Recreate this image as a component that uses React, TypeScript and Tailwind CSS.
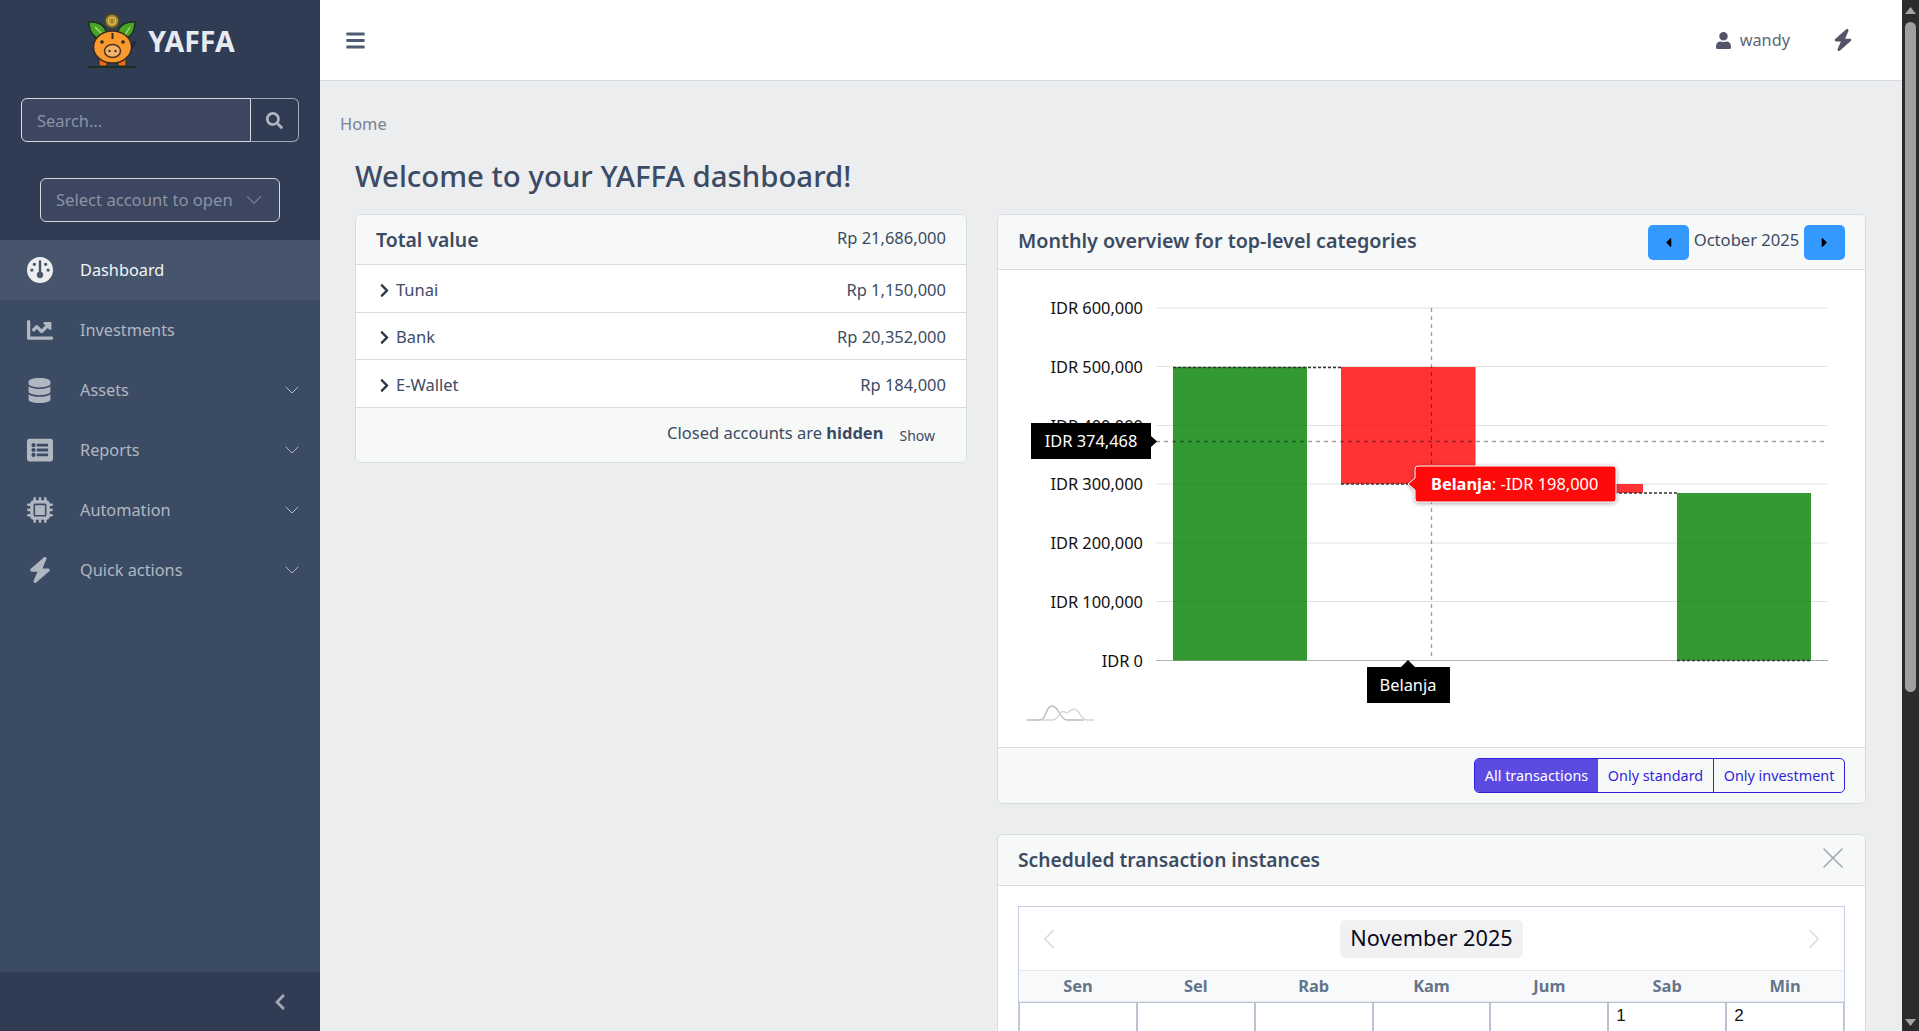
import { FaBars, FaCaretLeft, FaCaretRight, FaChartLine, FaChevronLeft, FaChevronRight, FaDatabase, FaListAlt, FaSearch, FaUser } from "react-icons/fa";
import { FaBolt, FaGauge, FaMicrochip } from "react-icons/fa6";
import { ChevronDown, ChevronLeft, ChevronRight, X } from "lucide-react";

const font = "[font-family:'Noto_Sans','Liberation_Sans',sans-serif]";

function Piggy() {
  return (
    <svg width="52" height="56" viewBox="0 0 52 56" className="shrink-0">
      <circle cx="25" cy="8" r="7" fill="#a8892f" stroke="#4b4a2a" strokeWidth="1.5" />
      <circle cx="25" cy="8" r="3.5" fill="none" stroke="#e3c766" strokeWidth="1.2" />
      <path d="M2 9 C13 8 21 14 20 26 C10 28 2 22 2 9Z" fill="#4aa324" stroke="#1c2f22" strokeWidth="1.5" />
      <path d="M48 9 C37 8 29 14 30 26 C40 28 48 22 48 9Z" fill="#4aa324" stroke="#1c2f22" strokeWidth="1.5" />
      <path d="M8 14 L17 23 M38 22 L43 14" stroke="#b6e07a" strokeWidth="1.2" />
      <path d="M12 44 L12 53 L20 53 L20 47 L31 47 L31 53 L39 53 L39 44Z" fill="#f26a12" stroke="#1c2f22" strokeWidth="1" />
      <ellipse cx="25.500" cy="34" rx="19" ry="16" fill="#fb9a2c" stroke="#3a2c22" strokeWidth="1.5" />
      <path d="M44 30 L50 27 L47 34 L44 37Z" fill="#1f2a3c" />
      <rect x="24.500" y="20" width="2" height="6" fill="#3a2c22" />
      <ellipse cx="25.500" cy="38" rx="8" ry="6.500" fill="#f6b26b" stroke="#4a3425" strokeWidth="1.5" />
      <circle cx="22.500" cy="38" r="1.200" fill="#4a3425" />
      <circle cx="28.500" cy="38" r="1.200" fill="#4a3425" />
      <circle cx="15" cy="29" r="1.800" fill="#2a2a2a" />
      <circle cx="36" cy="29" r="1.800" fill="#2a2a2a" />
      <rect x="1" y="53" width="48" height="2" fill="#1c2f22" />
    </svg>
  );
}

function NavItem({ icon, label, active, caret }: { icon: React.ReactNode; label: string; active?: boolean; caret?: boolean }) {
  return (
    <div className={`flex h-[60px] items-center pl-[27px] pr-[16px] text-[16.300px] ${active ? "bg-[#46546c] text-[#f2f4f7]" : "text-[#b1b7c1]"}`}>
      <span className={`flex w-[53px] shrink-0 items-center ${active ? "text-[#ebedef]" : "text-[#b1b7c1]"}`}>{icon}</span>
      <span className="flex-1">{label}</span>
      {caret && <ChevronDown size={24} strokeWidth={1} className="text-[#b1b7c1]" />}
    </div>
  );
}

function Sidebar() {
  return (
    <aside className="flex h-full w-[320px] shrink-0 flex-col bg-[#303c54]">
      <div className="flex h-[80px] shrink-0 items-center justify-center gap-[9px] pl-[2px] pt-[2px]">
        <Piggy />
        <span className="text-[28.500px] font-bold text-[#e6eaf1]">YAFFA</span>
      </div>
      <div className="mx-[21px] mt-[18px] flex h-[44px] shrink-0 text-[16.400px]">
        <input readOnly placeholder="Search..." className="h-full w-[230px] rounded-l-[6px] border border-[#d8dbe0] bg-[#3c4660] px-[15px] text-[#ccc] outline-none placeholder:text-[#8a93a3]" />
        <div className="flex h-full flex-1 items-center justify-center rounded-r-[6px] border border-l-0 border-[#a3a9b5] text-[#b1b7c1]">
          <FaSearch size={17} />
        </div>
      </div>
      <div className="mx-[40px] mt-[36px] flex h-[44px] shrink-0 items-center justify-between rounded-[6px] border border-[#d8dbe0] bg-[#3c4660] pl-[15px] pr-[12px] text-[16.600px] text-[#8a93a3]">
        <span>Select account to open</span>
        <ChevronDown size={26} strokeWidth={1.200} className="text-[#737c8d]" />
      </div>
      <nav className="mt-[18px] flex-1 bg-[#3c4b64]">
        <NavItem active label="Dashboard" icon={<FaGauge size={26} />} />
        <NavItem label="Investments" icon={<FaChartLine size={26} />} />
        <NavItem caret label="Assets" icon={<FaDatabase size={25} />} />
        <NavItem caret label="Reports" icon={<FaListAlt size={26} />} />
        <NavItem caret label="Automation" icon={<FaMicrochip size={26} />} />
        <NavItem caret label="Quick actions" icon={<FaBolt size={26} />} />
      </nav>
      <div className="flex h-[59px] shrink-0 items-center justify-end bg-[#303c54] pr-[31px] text-[#a3aab6]">
        <FaChevronLeft size={18} />
      </div>
    </aside>
  );
}

function Header() {
  return (
    <header className="flex h-[81px] shrink-0 items-center border-b border-[#d8dbe0] bg-white pl-[25px] text-[#4f5d73]">
      <FaBars size={21} className="text-[#4f5d73]" />
      <div className="ml-auto flex items-center pr-[48px]">
        <FaUser size={17} className="text-[#545468]" />
        <span className="ml-[8px] text-[16.300px] text-[#5c6873]">wandy</span>
        <FaBolt size={22} className="ml-[42px] text-[#545468]" />
      </div>
    </header>
  );
}

function AccountRow({ name, value }: { name: string; value: string }) {
  return (
    <div className="flex h-[47.500px] items-center justify-between border-b border-[#d8dbe0] pl-[21px] pr-[20px] pt-[4px] text-[16.500px] text-[#3c4b64]">
      <span className="flex items-center gap-[4px]">
        <FaChevronRight size={15} className="text-[#2c384a]" />
        {name}
      </span>
      <span>{value}</span>
    </div>
  );
}

function TotalCard() {
  return (
    <section className="overflow-hidden rounded-[6px] border border-[#d8dbe0] bg-white">
      <div className="flex h-[50px] items-center justify-between border-b border-[#d8dbe0] bg-[#f7f8f8] pl-[20px] pr-[20px] text-[#3c4b64]">
        <span className="pt-[1px] text-[19.400px] font-semibold">Total value</span>
        <span className="-mt-[3px] text-[16.500px]">Rp 21,686,000</span>
      </div>
      <AccountRow name="Tunai" value="Rp 1,150,000" />
      <AccountRow name="Bank" value="Rp 20,352,000" />
      <AccountRow name="E-Wallet" value="Rp 184,000" />
      <div className="flex h-[54px] items-center justify-end bg-[#f7f8f8] pb-[2px] pr-[31px] text-[16.500px] text-[#3c4b64]">
        <span>Closed accounts are <b className="font-bold">hidden</b></span>
        <span className="ml-[16px] mt-[3px] text-[14px]">Show</span>
      </div>
    </section>
  );
}

function Chart() {
  const ticks: [string, number][] = [
    ["IDR 600,000", 309],
    ["IDR 500,000", 367.5],
    ["IDR 400,000", 426.5],
    ["IDR 300,000", 485],
    ["IDR 200,000", 544],
    ["IDR 100,000", 602.5],
    ["IDR 0", 661.5],
  ];
  return (
    <svg viewBox="998 271 866 477" className="block h-[477px] w-[866px]" fontFamily="'Noto Sans','Liberation Sans',sans-serif">
      {ticks.map(([t, y]) => (
        <g key={t}>
          <line x1="1156" x2="1827" y1={y} y2={y} stroke={y > 660 ? "#b4b4b4" : "#e2e2e2"} strokeWidth="1" />
          <text x="1143" y={y + 6} textAnchor="end" fontSize="16.400" fill="#111">{t}</text>
        </g>
      ))}
      <rect x="1173" y="368" width="134" height="293.500" fill="#008000" fillOpacity="0.8" />
      <rect x="1341" y="368" width="134.500" height="117" fill="#ff0000" fillOpacity="0.8" />
      <rect x="1509" y="485" width="134" height="9" fill="#ff0000" fillOpacity="0.8" />
      <rect x="1677" y="494" width="134" height="167.500" fill="#008000" fillOpacity="0.8" />
      <g stroke="#333" strokeWidth="1.500" strokeDasharray="3 2">
        <line x1="1173" x2="1341" y1="368.500" y2="368.500" />
        <line x1="1341" x2="1509" y1="485" y2="485" />
        <line x1="1509" x2="1677" y1="494" y2="494" />
        <line x1="1677" x2="1811" y1="661.500" y2="661.500" />
      </g>
      <line x1="1811" x2="1828" y1="661.500" y2="661.500" stroke="#999" strokeDasharray="3 2" />
      <line x1="1431.500" x2="1431.500" y1="309" y2="660" stroke="#000" strokeOpacity="0.38" strokeWidth="1.300" strokeDasharray="4 4" />
      <line x1="1156" x2="1828" y1="442.500" y2="442.500" stroke="#000" strokeOpacity="0.38" strokeWidth="1.300" strokeDasharray="4 4" />
      <path d="M1031 424 H1151 V437 L1157 442.500 L1151 448 V460 H1031Z" fill="#000" />
      <text x="1091" y="447.500" textAnchor="middle" fontSize="16.400" fill="#fff">IDR 374,468</text>
      <path d="M1367 668 H1401 L1408 661 L1415 668 H1450 V704 H1367Z" fill="#000" />
      <text x="1408" y="691.500" textAnchor="middle" fontSize="16.400" fill="#fff">Belanja</text>
      <path d="M1418 467 H1613 Q1616 467 1616 470 V500 Q1616 503 1613 503 H1418 Q1415 503 1415 500 V491 L1408 485 L1415 479 V470 Q1415 467 1418 467Z" fill="#ff0a0a" stroke="#fff" strokeWidth="1" style={{ filter: "drop-shadow(0 1px 2px rgba(0,0,0,.35))" }} />
      <text x="1431" y="490.500" fontSize="16.400" fill="#fff"><tspan fontWeight="700">Belanja</tspan>: -IDR 198,000</text>
      <g fill="none" strokeWidth="1.500">
        <path d="M1027 721 H1040 C1047 721 1045 707 1052 707 C1059 707 1060 721 1067 721 H1084" stroke="#bdbdbd" />
        <path d="M1042 721 H1052 C1060 721 1059 710 1065 713 C1068 716 1070 710 1074 710 C1080 710 1080 721 1087 721 H1094" stroke="#d8d8d8" />
      </g>
    </svg>
  );
}

function OverviewCard() {
  return (
    <section className="overflow-hidden rounded-[6px] border border-[#d8dbe0] bg-white">
      <div className="flex h-[55px] items-center justify-between border-b border-[#d8dbe0] bg-[#f7f8f8] pl-[20px] pr-[20px] text-[#3c4b64]">
        <span className="pb-[2px] text-[19.700px] font-semibold">Monthly overview for top-level categories</span>
        <div className="flex items-center text-[16.600px]">
          <div className="flex h-[35px] w-[41px] items-center justify-center rounded-[5px] bg-[#3399ff] text-black"><FaCaretLeft size={15} /></div>
          <span className="w-[115px] pb-[4px] text-center">October 2025</span>
          <div className="flex h-[35px] w-[41px] items-center justify-center rounded-[5px] bg-[#3399ff] text-black"><FaCaretRight size={15} /></div>
        </div>
      </div>
      <Chart />
      <div className="flex h-[56px] items-center justify-end border-t border-[#d8dbe0] bg-[#f7f8f8] pr-[20px] text-[14.400px]">
        <div className="flex h-[35px] items-center rounded-[5px] border border-[#321fdb] text-[#321fdb]">
          <span className="flex h-full w-[123px] items-center justify-center rounded-l-[4px] bg-[#5b4be0] text-white">All transactions</span>
          <span className="flex h-full w-[115px] items-center justify-center">Only standard</span>
          <span className="flex h-full w-[131px] items-center justify-center border-l border-[#321fdb]">Only investment</span>
        </div>
      </div>
    </section>
  );
}

function CalendarCard() {
  const days = ["Sen", "Sel", "Rab", "Kam", "Jum", "Sab", "Min"];
  const cells = ["", "", "", "", "", "1", "2"];
  return (
    <section className="rounded-[6px] border border-[#d8dbe0] bg-white">
      <div className="flex h-[51px] items-center justify-between rounded-t-[6px] border-b border-[#d8dbe0] bg-[#f7f8f8] pl-[20px] pr-[14px]">
        <span className="text-[19.200px] font-semibold text-[#3c4b64]">Scheduled transaction instances</span>
        <X size={36} strokeWidth={1} className="-mt-[4px] text-[#9da5b1]" />
      </div>
      <div className="mx-[20px] mt-[20px] border border-[#c4d0e0]">
        <div className="flex h-[63px] items-center justify-between px-[13px]">
          <ChevronLeft size={34} strokeWidth={1.100} className="text-[#d8dbe0]" />
          <span className="flex h-[38px] w-[183px] items-center justify-center rounded-[5px] bg-[#f1f1f1] text-[21.700px] text-[#0a0a23]">November 2025</span>
          <ChevronRight size={34} strokeWidth={1.100} className="text-[#d8dbe0]" />
        </div>
        <div className="grid grid-cols-7 border-y border-[#e6e9ee] bg-[#f8f9fb]">
          {days.map((d) => (
            <span key={d} className="flex h-[30px] items-center justify-center text-[16.400px] font-bold text-[#64748b]">{d}</span>
          ))}
        </div>
        <div className="grid grid-cols-7 border-t border-[#b8c2d0]">
          {cells.map((c, i) => (
            <div key={i} className="h-[120px] border-x border-[#b8c2d0] pl-[7px] [font-family:'Liberation_Sans',sans-serif] text-[17px] leading-[26px] text-[#111]">{c}</div>
          ))}
        </div>
      </div>
    </section>
  );
}

function Scrollbar() {
  return (
    <div className="flex h-full w-[17px] shrink-0 flex-col items-center bg-[#2c2c2c]">
      <svg width="17" height="22" viewBox="0 0 17 22"><path d="M8.500 7 L14 14 H3Z" fill="#a3a3a3" /></svg>
      <div className="h-[670px] w-[11px] rounded-[6px] bg-[#a0a0a0]" />
      <svg width="17" height="17" viewBox="0 0 17 17" className="mt-auto"><path d="M3 5 H14 L8.500 12Z" fill="#a3a3a3" /></svg>
    </div>
  );
}

export default function App() {
  return (
    <div className={`flex h-screen w-full overflow-hidden bg-[#ebedef] ${font}`}>
      <Sidebar />
      <main className="flex min-w-0 flex-1 flex-col">
        <Header />
        <div className="min-h-0 flex-1 overflow-hidden pl-[35px] pr-[36px]">
          <div className="-ml-[15px] mt-[32px] text-[16.400px] leading-[22px] text-[#768192]">Home</div>
          <h1 className="mt-[24px] text-[29.400px] font-medium leading-[34px] text-[#3c4b64]">Welcome to your YAFFA dashboard!</h1>
          <div className="mt-[21px] flex items-start gap-[30px]">
            <div className="w-[612px] shrink-0"><TotalCard /></div>
            <div className="flex min-w-0 flex-1 flex-col gap-[30px]">
              <OverviewCard />
              <CalendarCard />
            </div>
          </div>
        </div>
      </main>
      <Scrollbar />
    </div>
  );
}
